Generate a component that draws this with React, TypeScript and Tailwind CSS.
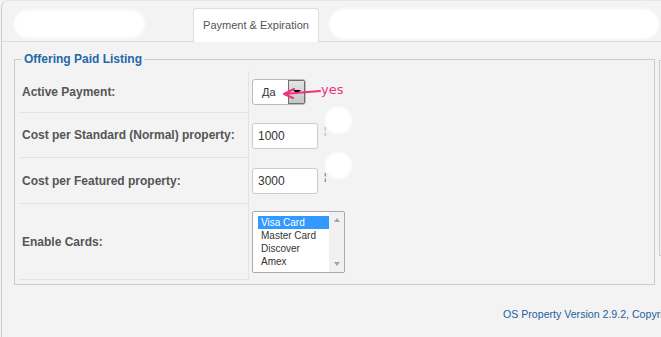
import React from "react";

function Row({
  label,
  h,
  children,
}: {
  label: string;
  h: string;
  children: React.ReactNode;
}) {
  return (
    <>
      <div
        className={`${h} flex items-center border-b border-r border-[#e3e3e3] pl-[3px] text-[12px] font-bold text-[#555]`}
      >
        {label}
      </div>
      <div className="flex items-center pl-[3px]">{children}</div>
    </>
  );
}

function Blob({ top }: { top: string }) {
  return (
    <span
      className={`absolute left-[1px] ${top} h-[27px] w-[27px] rounded-full bg-white blur-[1px]`}
    />
  );
}

export default function App() {
  return (
    <div
      className="relative h-[337px] w-[661px] overflow-hidden bg-[#f3f3f3]"
      style={{ fontFamily: '"Liberation Sans", Arial, sans-serif' }}
    >
      <div className="ml-px h-full rounded-tl-[7px] border-l border-t border-l-[#cccccc] border-t-[#e6e6e6]">
        {/* tab row */}
        <div className="flex h-[41px] items-start border-b border-[#dddddd] pl-[8px]">
          <div className="ml-[4px] mt-[9px] h-[28px] w-[131px] rounded-full bg-white blur-[1px]" />
          <div className="relative z-10 ml-[48px] mt-[7px] flex h-[34px] w-[126px] items-center justify-center rounded-t-[4px] border border-b-0 border-[#dddddd] bg-white text-[11px] text-[#555]">
            Payment &amp; Expiration
          </div>
          <div className="ml-[10px] mt-[8px] h-[30px] w-[330px] rounded-full bg-white blur-[1px]" />
        </div>

        {/* content */}
        <div className="flex items-start pl-[12px]">
          <fieldset className="mt-[10px] w-[641px] shrink-0 border border-[#cccccc] px-[4px] pb-[4px] pt-[5px]">
            <legend className="ml-[3px] px-[2px] text-[12px] font-bold leading-[14px] text-[#2468a8]">
              Offering Paid Listing
            </legend>
            <div className="grid grid-cols-[230px_1fr]">
              <Row label="Active Payment:" h="h-[42px]">
                <div className="flex h-[26px] w-[54px] overflow-hidden rounded-[3px] border border-[#bbbbbb] bg-white">
                  <span className="flex-1 pl-[9px] text-[11px] leading-[24px] text-[#333]">
                    Да
                  </span>
                  <span className="flex w-[17px] justify-center border border-[#707070] bg-gradient-to-b from-[#e4e4e4] to-[#c6c6c6] pt-[9px]">
                    <span className="h-0 w-0 border-l-[4px] border-r-[4px] border-t-[4px] border-l-transparent border-r-transparent border-t-black" />
                  </span>
                </div>
              </Row>
              <Row label="Cost per Standard (Normal) property:" h="h-[45px]">
                <div className="flex h-[26px] w-[66px] items-center rounded-[3px] border border-[#cccccc] bg-white pl-[5px] text-[12px] text-[#333]">
                  1000
                </div>
                <span className="relative ml-[6px] -mt-[8px] text-[9px] leading-[9px] text-[#b59a6a]">
                  ¦
                  <Blob top="top-[-20px]" />
                </span>
              </Row>
              <Row label="Cost per Featured property:" h="h-[46px]">
                <div className="flex h-[26px] w-[66px] items-center rounded-[3px] border border-[#cccccc] bg-white pl-[5px] text-[12px] text-[#333]">
                  3000
                </div>
                <span className="relative ml-[6px] -mt-[8px] text-[9px] leading-[9px] text-[#2a3f8f]">
                  ¦
                  <Blob top="top-[-21px]" />
                </span>
              </Row>
              <Row label="Enable Cards:" h="h-[76px]">
                <div className="flex h-[62px] w-[93px] rounded-[2px] border border-[#aaaaaa] bg-white">
                  <div className="flex-1 pl-[5px] pt-[4px] text-[10px] leading-[13px] text-[#333]">
                    <div className="bg-[#3399ff] pl-[3px] text-white">Visa Card</div>
                    <div className="pl-[3px]">Master Card</div>
                    <div className="pl-[3px]">Discover</div>
                    <div className="pl-[3px]">Amex</div>
                  </div>
                  <div className="flex w-[15px] flex-col items-center justify-between bg-[#f1f1f1] py-[6px]">
                    <span className="h-0 w-0 border-b-[4px] border-l-[3px] border-r-[3px] border-b-[#a3a3a3] border-l-transparent border-r-transparent" />
                    <span className="h-0 w-0 border-l-[3px] border-r-[3px] border-t-[4px] border-l-transparent border-r-transparent border-t-[#a3a3a3]" />
                  </div>
                </div>
              </Row>
            </div>
          </fieldset>
          <div className="ml-[4px] mt-[18px] h-[196px] w-[100px] shrink-0 border border-[#cccccc]" />
        </div>

        {/* footer */}
        <div className="mt-[22px] whitespace-nowrap pl-[501px] text-[10.6px] text-[#1c5f9e]">
          OS Property Version 2.9.2, Copyri
        </div>
      </div>

      {/* annotation */}
      <svg
        className="absolute left-[280px] top-[84px]"
        width="44"
        height="18"
        viewBox="0 0 44 18"
      >
        <path
          d="M40 7 L4 10 M14 5 L4 10 L13 14"
          stroke="#f0327f"
          strokeWidth="2"
          fill="none"
          strokeLinecap="round"
          strokeLinejoin="round"
        />
      </svg>
      <span
        className="absolute left-[321px] top-[80px] text-[13px] text-[#f0327f]"
        style={{ fontFamily: '"DejaVu Sans", sans-serif' }}
      >
        yes
      </span>
    </div>
  );
}
